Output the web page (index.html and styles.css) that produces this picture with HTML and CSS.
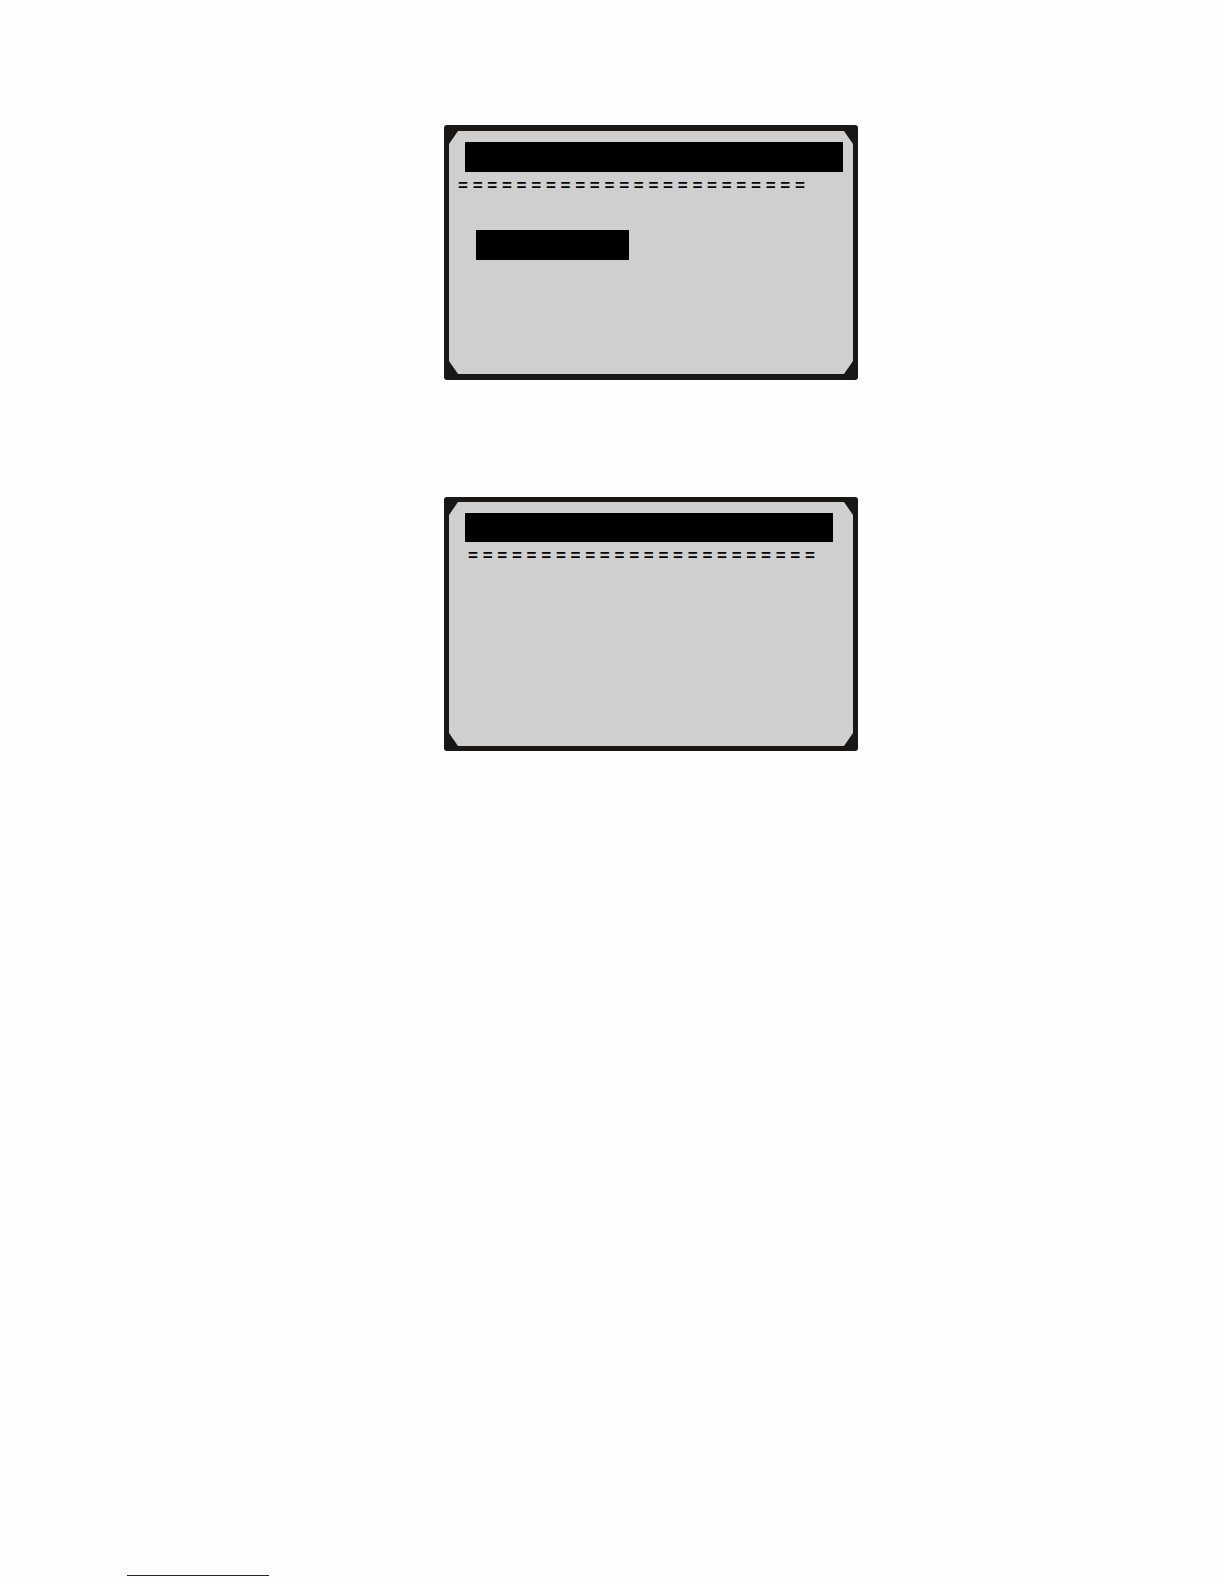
FILE: index.html
```html
<!DOCTYPE html>
<html lang="en">
<head>
    <meta charset="UTF-8">
    <meta name="viewport" content="width=device-width, initial-scale=1.0">
    <title>Display screens</title>
    <link rel="stylesheet" href="styles.css">
</head>
<body>

    <main class="screens">
        <section class="display">
            <div class="panel">
                <div class="bar title-bar"></div>
                <div class="divider">= = = = = = = = = = = = = = = = = = = = = = = =</div>
                <div class="bar selected-bar"></div>
            </div>
        </section>

        <section class="display">
            <div class="panel">
                <div class="bar title-bar short"></div>
                <div class="divider indented">= = = = = = = = = = = = = = = = = = = = = = = =</div>
            </div>
        </section>
    </main>

    <footer>
        <div class="footer-line"></div>
    </footer>

</body>
</html>
```
FILE: styles.css
```css
* { box-sizing: border-box; }
body {
    min-height: 100vh;
    margin: 0;
    display: flex;
    flex-direction: column;
    background: #fefefe;
    color: #000;
    font-family: "Liberation Sans", Arial, sans-serif;
}

.screens {
    display: flex;
    flex-direction: column;
    align-items: center;
    gap: 117px;
    padding: 125px 0 0 78px;
}

/* dark frame around each LCD */
.display {
    display: flex;
    width: 100%;
    max-width: 414px;
    min-height: 255px;
    padding: 6px 5px;
    background: #1a1816;
    border-radius: 3px;
}
.display + .display { padding: 5px; min-height: 254px; }

/* LCD area with the corners cut off */
.panel {
    flex: 1;
    padding: 11px 9px;
    background: #cfcfcf;
    clip-path: polygon(9px 0, calc(100% - 9px) 0, 100% 13px, 100% calc(100% - 13px), calc(100% - 9px) 100%, 9px 100%, 0 calc(100% - 13px), 0 13px);
}

.bar { height: 30px; background: #000; }
.title-bar { max-width: 378px; margin-left: 7px; margin-right: 1px; }
.title-bar.short { height: 29px; max-width: 368px; }
.selected-bar { max-width: 153px; margin: 34px 0 0 18px; }

.divider {
    height: 20px;
    margin-top: 4px;
    font-size: 17px;
    font-weight: bold;
    line-height: 20px;
    white-space: nowrap;
}
.divider.indented { margin-left: 10px; }

footer { margin-top: auto; padding: 0 127px 8px; }
.footer-line { max-width: 142px; height: 1px; background: #1a1a80; }
```
